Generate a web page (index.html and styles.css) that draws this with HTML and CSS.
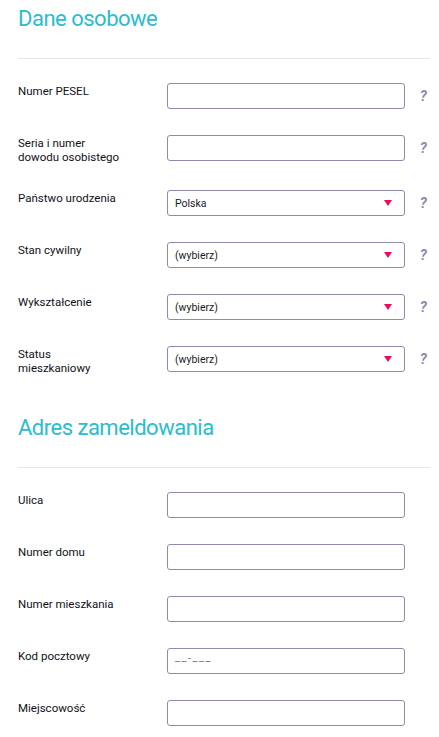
FILE: index.html
```html
<!DOCTYPE html>
<html lang="pl">
<head>
<meta charset="utf-8">
<title>Dane osobowe</title>
<link rel="stylesheet" href="styles.css">
</head>
<body>
<div class="page">
  <section class="section">
    <h2 class="section-title">Dane osobowe</h2>
    <div class="rows">
      <div class="row">
        <label class="label">Numer PESEL</label>
        <div class="field"></div>
        <span class="help">?</span>
      </div>
      <div class="row">
        <label class="label">Seria i numer<br>dowodu osobistego</label>
        <div class="field"></div>
        <span class="help">?</span>
      </div>
      <div class="row">
        <label class="label">Państwo urodzenia</label>
        <div class="field select"><span class="value">Polska</span><span class="caret"></span></div>
        <span class="help">?</span>
      </div>
      <div class="row">
        <label class="label">Stan cywilny</label>
        <div class="field select"><span class="value">(wybierz)</span><span class="caret"></span></div>
        <span class="help">?</span>
      </div>
      <div class="row">
        <label class="label">Wykształcenie</label>
        <div class="field select"><span class="value">(wybierz)</span><span class="caret"></span></div>
        <span class="help">?</span>
      </div>
      <div class="row">
        <label class="label">Status<br>mieszkaniowy</label>
        <div class="field select"><span class="value">(wybierz)</span><span class="caret"></span></div>
        <span class="help">?</span>
      </div>
    </div>
  </section>
  <section class="section">
    <h2 class="section-title">Adres zameldowania</h2>
    <div class="rows">
      <div class="row">
        <label class="label">Ulica</label>
        <div class="field"></div>
      </div>
      <div class="row">
        <label class="label">Numer domu</label>
        <div class="field"></div>
      </div>
      <div class="row">
        <label class="label">Numer mieszkania</label>
        <div class="field"></div>
      </div>
      <div class="row">
        <label class="label">Kod pocztowy</label>
        <div class="field"><span class="mask">__<span class="dash">-</span>___</span></div>
      </div>
      <div class="row">
        <label class="label">Miejscowość</label>
        <div class="field"></div>
      </div>
    </div>
  </section>
</div>
</body>
</html>
```
FILE: styles.css
```css
html, body {
  margin: 0;
  padding: 0;
  background: #ffffff;
}
body {
  font-family: Roboto, "Open Sans", sans-serif;
  color: #111119;
}
.page {
  padding: 4px 9px 0 18px;
}
.section {
  margin-bottom: 38px;
}
.section-title {
  margin: 0;
  font-size: 22px;
  line-height: 30px;
  font-weight: 400;
  letter-spacing: -0.5px;
  color: #2bbccf;
  padding-bottom: 24px;
  border-bottom: 1px solid #e6e6ea;
}
.rows {
  display: flex;
  flex-direction: column;
  gap: 26px;
  padding-top: 24px;
}
.row {
  display: flex;
  align-items: flex-start;
}
.label {
  width: 149px;
  flex: none;
  font-size: 11.5px;
  line-height: 14px;
  padding-top: 1px;
  font-weight: 400;
  color: #111119;
}
.field {
  box-sizing: border-box;
  width: 238px;
  height: 26px;
  flex: none;
  border: 1px solid #8f8bab;
  border-radius: 3px;
  display: flex;
  align-items: center;
  padding: 0 12px 0 7px;
  font-size: 10.5px;
  font-weight: 400;
  color: #1a1a26;
}
.select {
  justify-content: space-between;
}
.caret {
  width: 0;
  height: 0;
  border-left: 4px solid transparent;
  border-right: 4px solid transparent;
  border-top: 6px solid #ec0a5c;
}
.help {
  margin-left: 15px;
  margin-top: 4px;
  font-size: 14px;
  font-weight: 700;
  font-style: italic;
  color: #8e8aa8;
  line-height: 18px;
}
.mask {
  color: #77758a;
  letter-spacing: 1.5px;
  font-size: 11px;
  line-height: 1;
  position: relative;
  top: -4px;
}
.mask .dash {
  color: #77758a;
  position: relative;
  top: 1px;
}
```
